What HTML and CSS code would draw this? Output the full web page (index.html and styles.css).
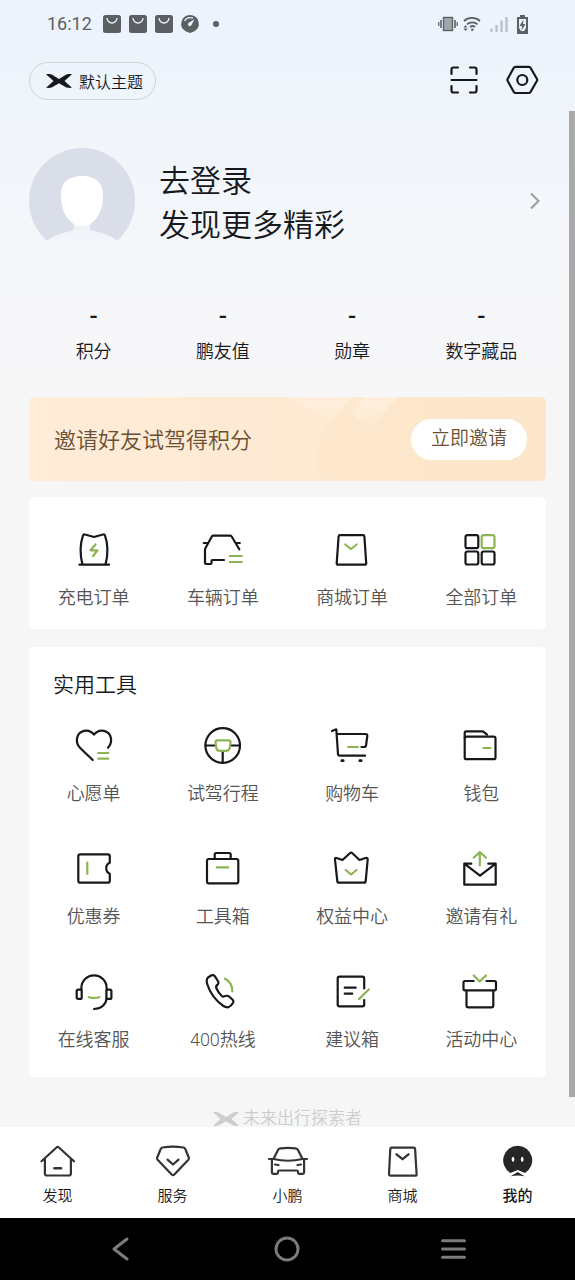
FILE: index.html
```html
<!DOCTYPE html>
<html lang="zh-CN">
<head>
<meta charset="utf-8">
<meta name="viewport" content="width=device-width, initial-scale=1">
<title>我的</title>
<link rel="stylesheet" href="styles.css">
</head>
<body>
<div class="app">
  <div class="status">
    <div class="status-group">
      <span class="clock">16:12</span>
      <svg class="status-icon" viewBox="0 0 18 18"><rect width="18" height="18" rx="2.5" fill="#5c5f64"/><path d="M4 3a5 5 0 0 0 10 0" fill="none" stroke="#edf3fc" stroke-width="1.3"/></svg>
      <svg class="status-icon" viewBox="0 0 18 18"><rect width="18" height="18" rx="2.5" fill="#5c5f64"/><path d="M4 3a5 5 0 0 0 10 0" fill="none" stroke="#edf3fc" stroke-width="1.3"/></svg>
      <svg class="status-icon" viewBox="0 0 18 18"><rect width="18" height="18" rx="2.5" fill="#5c5f64"/><path d="M4 3a5 5 0 0 0 10 0" fill="none" stroke="#edf3fc" stroke-width="1.3"/></svg>
      <svg class="status-icon" viewBox="0 0 18 18"><path d="M9 0a8.8 8.8 0 0 1 4.500 16.300L9 18l-4.500-1.700A8.800 8.800 0 0 1 9 0z" fill="#5c5f64"/><path d="M3.500 6A6.500 6.500 0 0 1 12 3.200" fill="none" stroke="#edf3fc" stroke-width="1.300"/><path d="M13.500 4.200L10.500 10a1.800 1.800 0 1 1-2.600-2.200z" fill="#edf3fc"/></svg>
      <span class="dot"></span>
    </div>
    <div class="status-group status-right">
      <svg width="20" height="16" viewBox="0 0 20 16" stroke="#5c5f64"><rect x="5.500" y="1.500" width="9" height="13" fill="#a3a6aa" stroke-width="1.400"/><path d="M3 4v8M17 4v8" stroke-width="1.600"/><path d="M.8 6v4M19.200 6v4" stroke-width="1.200"/></svg>
      <svg width="18" height="16" viewBox="0 0 18 16" fill="none" stroke="#5c5f64" stroke-width="1.700"><path d="M1 5a12 12 0 0 1 16 0M4 8.300a8 8 0 0 1 10.500 0M7 11a4 4 0 0 1 5 0"/><circle cx="9.300" cy="13.700" r="1.300" fill="#5c5f64" stroke="none"/><path d="M.5 11.500L2.500 9l2 2.500zM.5 12.500L2.500 15l2-2.500z" fill="#5c5f64" stroke="none"/></svg>
      <svg class="signal" width="18" height="16" viewBox="0 0 18 16" stroke="#babdc3" stroke-width="2.200"><path d="M1.500 16v-3.500M6.500 16V9M11.500 16V4.500M16.500 16V1"/></svg>
      <svg width="11" height="19" viewBox="0 0 11 19"><path d="M3 0h5v2h3v17H0V2h3z" fill="#5c5f64"/><path d="M2 4h7v9l-2 3H4l-2-3z" fill="#edf3fc"/><path d="M6.500 4.500L2.500 11H5l-.5 4.500 4-6.500H6z" fill="#5c5f64"/></svg>
    </div>
  </div>

  <header class="topbar">
    <button class="theme" type="button">
      <svg class="wing" viewBox="0 0 26 14" fill="currentColor"><path d="M0 .2C3 0 5 0 6.500.9L13 5 19.500.9C21 0 23 0 26 .2L18.500 7 26 13.800c-3 .2-5 .2-6.500-.7L13 9.200l-6.500 3.900C5 14 3 14 0 13.800L7.500 7z"/></svg>
      默认主题
    </button>
    <div class="actions">
      <button class="icon-btn" type="button" aria-label="扫一扫">
        <svg class="icon" viewBox="0 0 40 40"><path d="M7.500 13V8.500a2 2 0 0 1 2-2H14M26 6.500h4.500a2 2 0 0 1 2 2V13M7.500 25v4.500a2 2 0 0 0 2 2H14M26 31.500h4.500a2 2 0 0 0 2-2V25M7.500 19h25"/></svg>
      </button>
      <button class="icon-btn" type="button" aria-label="设置">
        <svg class="icon" viewBox="0 0 40 40"><path d="M13.500 5.800h13.300a2 2 0 0 1 1.700 1L35 18a2 2 0 0 1 0 1.800L28.500 31a2 2 0 0 1-1.700 1H13.500a2 2 0 0 1-1.700-1L5.600 19.800a2 2 0 0 1 0-1.800l6.200-11.200a2 2 0 0 1 1.700-1z"/><circle cx="20.300" cy="19" r="5"/></svg>
      </button>
    </div>
  </header>

  <div class="scroll">
    <main class="content">
      <a class="profile" href="#login">
        <svg class="avatar" viewBox="0 0 106 106"><defs><linearGradient id="body" x1="0" y1="0" x2="0" y2="1"><stop offset="0" stop-color="#eff2f8"/><stop offset="1" stop-color="#f5f7fa"/></linearGradient></defs><circle cx="53" cy="53" r="53" fill="#dadee9"/><path d="M18 92.500C27 86 37 84.500 44 82c1.500-1 1-5 0-7h18c-1 2-1.500 6 0 7 8 2.500 18 4 26 10.500L80 106H26z" fill="url(#body)"/><path d="M32 50C31 34 40 28 53 28s22 6 21 22c-.5 15-9 28-21 28S32.500 65 32 50z" fill="#fff"/></svg>
        <span class="greeting">去登录<br>发现更多精彩</span>
        <svg class="chevron" viewBox="0 0 10 18"><path d="M1 1.500L8.500 9 1 16.500"/></svg>
      </a>

      <dl class="stats">
        <div class="stat"><dt>积分</dt><dd>-</dd></div>
        <div class="stat"><dt>鹏友值</dt><dd>-</dd></div>
        <div class="stat"><dt>勋章</dt><dd>-</dd></div>
        <div class="stat"><dt>数字藏品</dt><dd>-</dd></div>
      </dl>

      <section class="banner">
        <svg class="banner-art" viewBox="0 0 260 84" preserveAspectRatio="none"><defs><linearGradient id="ray" x1="0" y1="0" x2="0" y2="1"><stop offset="0" stop-color="#fff" stop-opacity=".25"/><stop offset="1" stop-color="#fff" stop-opacity="0"/></linearGradient></defs><path d="M0 0h65L42 25z" fill="url(#ray)"/><path d="M78 0h33L82 32 65 18z" fill="url(#ray)"/><path d="M65 0L38 30q-16 24-4 54h226V0H111L82 32 65 18z" fill="#f9dfba" fill-opacity=".14"/></svg>
        <p class="banner-text">邀请好友试驾得积分</p>
        <button class="invite" type="button">立即邀请</button>
      </section>

      <nav class="card orders" aria-label="订单">
        <a class="item" href="#charge"><svg class="icon" viewBox="0 0 40 40"><path d="M5.500 34.700h29.500M8.500 34.700C6 25 6 14 9 5.500q.5-1.500 2-1L20 7l9-2.500q1.500-.5 2 1C34 14 34 25 31.500 34.700"/><path class="accent" d="M21.500 14.500L16.500 20.300H23.500L19 26"/></svg>充电订单</a>
        <a class="item" href="#car"><svg class="icon" viewBox="0 0 40 40"><path d="M21 30H9.500q-1 0-1 1v2q0 1-1 1H3q-1 0-1-1V20q0-1 .5-2L8.700 6.700q.5-1 1.500-1h17q1 0 1.600 1L36.300 19.300M.8 13H5M33 13h3.800"/><path class="accent" d="M26.700 26h12M26.700 32h12"/></svg>车辆订单</a>
        <a class="item" href="#mall"><svg class="icon" viewBox="0 0 40 40"><path d="M8 5.200h23q1.300 0 1.400 1.300l1.800 26.700q0 1.500-1.500 1.500H6.200q-1.500 0-1.500-1.500L6.600 6.500Q6.700 5.200 8 5.200z"/><path class="accent" d="M13.300 14.500L19 19l5.700-4.500"/></svg>商城订单</a>
        <a class="item" href="#all"><svg class="icon" viewBox="0 0 40 40"><rect x="4.500" y="5.200" width="12.800" height="13" rx="2"/><rect x="4.500" y="21.500" width="12.800" height="13" rx="2"/><rect x="20.700" y="21.500" width="12.800" height="13" rx="2"/><rect class="accent" x="20.700" y="5.200" width="12.800" height="13" rx="2"/></svg>全部订单</a>
      </nav>

      <section class="card tools">
        <h2 class="card-title">实用工具</h2>
        <nav class="tool-grid" aria-label="实用工具">
          <a class="item" href="#wish"><svg class="icon" viewBox="0 0 40 40"><path d="M18.700 34L6.200 22C3 19 2.500 16 3 12.500 4.200 4.500 14.500 1.500 20 8.700 25.500 1.500 35.800 4.500 37 12.500c.5 3.500-.5 6.500-3 9.200"/><path class="accent" d="M24.300 27h10M24.300 32.700h10"/></svg>心愿单</a>
          <a class="item" href="#drive"><svg class="icon" viewBox="0 0 40 40"><circle cx="19.700" cy="19.500" r="17.300"/><path d="M2.500 19.500h9.500M28 19.500h9M19.700 25.500v11"/><path class="accent" d="M14.500 14.400h11q2 0 2 2l-.8 5.500q-.7 3-3.700 3h-6q-3 0-3.700-3l-.8-5.500q0-2 2-2z"/></svg>试驾行程</a>
          <a class="item" href="#cart"><svg class="icon" viewBox="0 0 40 40"><path d="M0 5l4.300-1.700L6 28q.1 1.700 1.800 1.700H33M5 8h28.500q2 0 1.800 2l-1.200 9q-.3 2-2 2h-2.600"/><path d="M9.800 34.700h1.400M27.800 34.700h1.400" stroke-width="2.800"/><path class="accent" d="M16 21h10"/></svg>购物车</a>
          <a class="item" href="#wallet"><svg class="icon" viewBox="0 0 40 40"><rect x="3.700" y="10.600" width="30.800" height="22.600" rx="1.800"/><path d="M3.700 12V7q0-1.700 1.700-1.700h15.800q1 0 1.800.8L26 8.700"/><path class="accent" d="M22.300 22h7.300"/></svg>钱包</a>
          <a class="item" href="#coupon"><svg class="icon" viewBox="0 0 40 40"><path d="M6.300 5.300h27.500q2 0 2 2v6.500q-3.600 1.500-3.600 5.500t3.600 5.500v6.900q0 2-2 2H6.300q-2 0-2-2V7.300q0-2 2-2z"/><path class="accent" d="M13.300 13.700V25"/></svg>优惠券</a>
          <a class="item" href="#toolbox"><svg class="icon" viewBox="0 0 40 40"><rect x="4" y="10" width="31.300" height="24.300" rx="1.800"/><path d="M11.700 10V5.500Q11.700 4 13.200 4h13q1.500 0 1.500 1.500V10"/><path class="accent" d="M13.700 18.300h11.600"/></svg>工具箱</a>
          <a class="item" href="#rights"><svg class="icon" viewBox="0 0 40 40"><path d="M4.500 9l6 2 7.300-6.700q1.300-1.300 2.600 0L27.500 11l6-2q2.300-.5 2.200 1.500l-2 21.500q-.2 1.700-1.700 1.700H7q-1.500 0-1.700-1.700L3 10.500Q2.800 8.500 4.500 9z"/><path class="accent" d="M13.700 21L19 25.500l5.500-4.500"/></svg>权益中心</a>
          <a class="item" href="#gift"><svg class="icon" viewBox="0 0 40 40"><path d="M10.300 14.700h-7v21h31.400v-21H27.300M3.300 14.700l15.700 12 15.700-12"/><path class="accent" d="M18.800 16.500V3M12.700 8.700l6.100-5.700 6.300 5.700"/></svg>邀请有礼</a>
          <a class="item" href="#service"><svg class="icon" viewBox="0 0 40 40"><path d="M7.400 18v-2c0-7 5.600-12.600 12.600-12.600S32.600 9 32.600 16v2M32.600 26.500C32 32.500 27 37 20 37"/><rect x="2.700" y="17.600" width="5" height="9.300" rx="1.500"/><rect x="32.400" y="17.600" width="5" height="9.300" rx="1.500"/><path class="accent" d="M14.700 25.200q5.300 1.500 10.600 0"/></svg>在线客服</a>
          <a class="item" href="#hotline"><svg class="icon" viewBox="0 0 40 40"><path d="M5 5.500L8.500 3.300q2-.8 3.300.8L15.200 9.500q.8 1.700-.4 3-2.500 1.500-1.300 4 2 4.500 5.300 7.500 1.200 1 2.500.3 3-1.300 5 .4l3.400 3.100q1.400 1.400.4 3-2 3.500-4.700 4.400-2.500.4-5-1.200C12.500 28.500 7 21 4.200 12 3 8 4 6.500 5 5.500z"/><path class="accent" d="M22 6.700q7.500 3.800 7.300 12.600"/></svg>400热线</a>
          <a class="item" href="#suggest"><svg class="icon" viewBox="0 0 40 40"><path d="M32.200 16.500v-10q0-1.800-1.800-1.800H7.500q-1.800 0-1.800 1.800v26q0 1.800 1.800 1.800h22.900q1.800 0 1.800-1.800v-4.500M12.700 15.700h11M12.700 21.700h7.600"/><path class="accent" d="M37 17.300L27 27"/></svg>建议箱</a>
          <a class="item" href="#activity"><svg class="icon" viewBox="0 0 40 40"><path d="M12.700 9H4Q2.500 9 2.500 10.500v6.300q0 1.500 1.500 1.500h29.500q1.500 0 1.500-1.500V10.500Q35 9 33.500 9h-8M5.500 18.300v15.200q0 1.800 1.800 1.800h23.200q1.800 0 1.800-1.800V18.300"/><path class="accent" d="M12.700 3.500l6 6 6.300-6"/></svg>活动中心</a>
        </nav>
      </section>

      <p class="slogan">
        <svg class="wing" viewBox="0 0 26 14" fill="currentColor"><path d="M0 .2C3 0 5 0 6.500.9L13 5 19.500.9C21 0 23 0 26 .2L18.500 7 26 13.800c-3 .2-5 .2-6.500-.7L13 9.200l-6.500 3.900C5 14 3 14 0 13.800L7.500 7z"/></svg>
        未来出行探索者
      </p>
    </main>
    <span class="thumb"></span>
  </div>

  <nav class="tabs" aria-label="主导航">
    <a class="tab" href="#discover"><svg class="icon" viewBox="0 0 40 40"><path d="M3.500 20.300L18.500 6.500q1.200-1.200 2.400 0L36 20.300M6.900 18v14.500q0 2 2 2h22q2 0 2-2V18"/><path d="M16.500 27.300h6.500" stroke-width="2.600"/></svg>发现</a>
    <a class="tab" href="#serve"><svg class="icon" viewBox="0 0 40 40"><path d="M9.500 6.500q10.500-1.800 21 0 1.300.2 1.800 1.500l3.500 8.500q.5 1.200-.4 2.200L21.300 33.500q-1.300 1.300-2.600 0L4.600 18.700q-.9-1-.4-2.200L7.700 8q.5-1.300 1.800-1.500z"/><path d="M14.500 18.700l5.500 4.800 5.500-4.800"/></svg>服务</a>
    <a class="tab" href="#xiaopeng"><svg class="icon" viewBox="0 0 40 40"><path d="M1 18h4.500L10 9q.8-1.500 2.500-1.700 7.500-.8 15 0 1.700.2 2.500 1.700l4.500 9H39M5.500 18q14.500 3.500 29 0M3.900 19.500v12q0 1.300 1.300 1.300h3.500q1.300 0 1.300-1.300v-.7q0-1.300 1.300-1.300h17.400q1.300 0 1.300 1.300v.7q0 1.300 1.300 1.300h3.500q1.300 0 1.300-1.300v-12M7 23.500l3.500.5M33 23.500l-3.500.5"/></svg>小鹏</a>
    <a class="tab" href="#shop"><svg class="icon" viewBox="0 0 40 40"><path d="M8.700 6.600h22q1.300 0 1.400 1.300l1.500 25.300q0 1.500-1.500 1.500H7.500Q6 34.700 6 33.200L7.300 7.900q.1-1.300 1.400-1.300z"/><path d="M13.500 13.300l6 4.900 6-4.900" stroke-width="2.300"/></svg>商城</a>
    <a class="tab tab-on" href="#me" aria-current="page"><svg class="icon" viewBox="0 0 40 40"><path d="M19.700 4.700a14.600 14.600 0 0 1 7.300 27.200L19.700 29l-7.300 2.900A14.600 14.600 0 0 1 19.700 4.700zM19.700 31l7 4.300q-7-1.600-14 0z" class="solid"/><ellipse cx="15" cy="18.300" rx="1.300" ry="2.500" class="eye"/><ellipse cx="24.200" cy="18.300" rx="1.300" ry="2.500" class="eye"/></svg>我的</a>
  </nav>

  <div class="sysnav">
    <button class="sys-btn" type="button" aria-label="返回"><svg class="sys-icon" viewBox="0 0 28 28"><path d="M20 4L7 14l13 10"/></svg></button>
    <button class="sys-btn" type="button" aria-label="主页"><svg class="sys-icon" viewBox="0 0 28 28"><circle cx="14" cy="14" r="11"/></svg></button>
    <button class="sys-btn" type="button" aria-label="最近任务"><svg class="sys-icon" viewBox="0 0 28 28"><path d="M2.500 5.700h22M2.500 14h22M2.500 22.300h22"/></svg></button>
  </div>
</div>
</body>
</html>
```

FILE: styles.css
```css
* {
  box-sizing: border-box;
}

body {
  margin: 0;
  font-family: Roboto, "Noto Sans CJK SC", sans-serif;
  font-weight: 350;
  color: #16181c;
}

button {
  margin: 0;
  border: 0;
  padding: 0;
  background: none;
  font: inherit;
  color: inherit;
}

a {
  color: inherit;
  text-decoration: none;
}

p, h2, dl, dd {
  margin: 0;
  font-weight: inherit;
}

svg {
  display: block;
  flex: none;
  overflow: visible;
}

.app {
  display: flex;
  flex-direction: column;
  height: 100vh;
  background: linear-gradient(#ebf3fd 0, #f0f5fb 110px, #f6f7f9 300px, #f6f6f6 500px);
}

/* Status bar */
.status {
  display: flex;
  justify-content: space-between;
  align-items: center;
  height: 48px;
  padding: 0 47px;
  color: #5c5f64;
}

.status-group {
  display: flex;
  align-items: center;
  gap: 8px;
}

.status-right {
  gap: 5px;
}

.clock {
  margin-right: 3px;
  font-size: 18px;
  line-height: 24px;
  font-weight: 400;
}

.status-icon {
  width: 18px;
  height: 18px;
}

.dot {
  width: 6px;
  height: 6px;
  margin-left: 6px;
  border-radius: 50%;
  background: #5c5f64;
}

.signal {
  margin: 0 4px;
}

/* Top bar */
.topbar {
  display: flex;
  justify-content: space-between;
  align-items: center;
  height: 63px;
  padding: 2px 33px 0 29px;
}

.theme {
  display: flex;
  align-items: center;
  gap: 7px;
  height: 38px;
  padding: 0 12px 0 16px;
  border: 1px solid #cfd3da;
  border-radius: 19px;
  font-size: 16px;
}

.wing {
  width: 26px;
  height: 14px;
}

.actions {
  display: flex;
  gap: 18px;
}

.icon {
  width: 40px;
  height: 40px;
  fill: none;
  stroke: #16181c;
  stroke-width: 2.2;
  stroke-linecap: round;
  stroke-linejoin: round;
}

.accent {
  stroke: #8cb453;
}

/* Scrolling content */
.scroll {
  position: relative;
  flex: 1;
  min-height: 0;
}

.content {
  height: 100%;
  padding: 37px 29px 0;
  overflow: hidden;
}

.thumb {
  position: absolute;
  top: 0;
  right: 0;
  width: 6px;
  height: 97%;
  background: #a9a9aa;
}

.profile {
  display: flex;
  align-items: center;
  gap: 24px;
}

.avatar {
  width: 106px;
  height: 106px;
}

.greeting {
  flex: 1;
  padding-top: 6px;
  font-size: 31px;
  line-height: 44px;
}

.chevron {
  width: 10px;
  height: 18px;
  margin-right: 6px;
  fill: none;
  stroke: #9a9da1;
  stroke-width: 2;
}

.stats {
  display: grid;
  grid-template-columns: repeat(4, 1fr);
  margin: 50px 0 33px;
}

.stat {
  display: flex;
  flex-direction: column-reverse;
  align-items: center;
  gap: 12px;
  font-size: 18px;
  line-height: 24px;
}

.stat dd {
  font-size: 24px;
  font-weight: 500;
}

/* Invitation banner */
.banner {
  position: relative;
  display: flex;
  justify-content: space-between;
  align-items: center;
  height: 84px;
  padding: 0 19px 0 25px;
  border-radius: 5px;
  overflow: hidden;
  background: linear-gradient(90deg, #ffecd9, #fde8cc);
  color: #6a5033;
}

.banner-art {
  position: absolute;
  top: 0;
  right: 0;
  width: 50%;
  height: 100%;
}

.banner-text {
  padding-bottom: 2px;
  font-size: 22px;
}

.invite {
  position: relative;
  padding: 6px 20px 7px;
  border-radius: 21px;
  background: #fff;
  font-size: 19px;
  line-height: 28px;
}

/* Cards */
.card {
  border-radius: 5px;
  background: #fff;
}

.orders,
.tool-grid {
  display: grid;
  grid-template-columns: repeat(4, 1fr);
}

.orders {
  margin-top: 16px;
  padding: 33px 0 19px;
}

.tools {
  margin-top: 18px;
  padding: 24px 0 25px;
}

.card-title {
  padding-left: 24px;
  font-size: 21px;
  line-height: 28px;
}

.tool-grid {
  margin-top: 27px;
  row-gap: 43px;
}

.item {
  display: flex;
  flex-direction: column;
  align-items: center;
  gap: 16px;
  font-size: 18px;
  line-height: 24px;
  color: #555;
}

.slogan {
  display: flex;
  justify-content: center;
  align-items: center;
  gap: 4px;
  margin-top: 33px;
  font-size: 17px;
  line-height: 17px;
  color: #cdcdcd;
}

/* Bottom tabs */
.tabs {
  position: relative;
  display: grid;
  grid-template-columns: repeat(5, 1fr);
  padding: 14px 0 12px;
  background: #fff;
}

.tab {
  display: flex;
  flex-direction: column;
  align-items: center;
  gap: 5px;
  font-size: 15px;
  line-height: 20px;
}

.tab-on {
  font-weight: 500;
}

.tab .icon {
  stroke: #333;
}

.tab .solid {
  fill: #262626;
  stroke: none;
}

.tab .eye {
  fill: #fff;
  stroke: none;
}

/* System navigation */
.sysnav {
  display: grid;
  grid-template-columns: repeat(3, 1fr);
  padding: 17px 38px;
  background: #000;
}

.sys-btn {
  display: flex;
  justify-content: center;
}

.sys-icon {
  width: 28px;
  height: 28px;
  fill: none;
  stroke: #7b7b7b;
  stroke-width: 3;
  stroke-linecap: round;
  stroke-linejoin: round;
}
```
